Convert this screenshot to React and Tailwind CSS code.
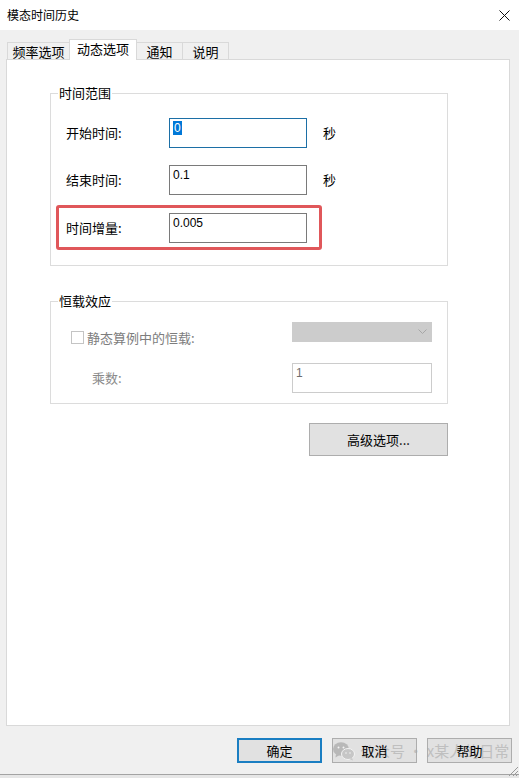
import React from 'react';

const FONT = "font-['Microsoft_YaHei','Noto_Sans_CJK_SC',sans-serif]";

// plain text box, text sits at the top-left like a Win32 edit control
const Field = ({ value, focused, selected }) => (
  <div
    className={`w-[138px] h-[30px] bg-white border ${focused ? 'border-[#1c6fa6]' : 'border-[#7a7a7a]'} pl-[3px] pt-[2px] text-[12px] leading-[14px] font-['Liberation_Sans',sans-serif]`}
  >
    {selected ? <span className="bg-[#0078d7] text-white px-px">{value}</span> : value}
  </div>
);

const Row = ({ label, children, unit }) => (
  <div className="h-[30px] flex items-center">
    <div className="w-[103px] leading-[18px]">{label}</div>
    {children}
    {unit && <div className="ml-[16px] leading-[18px]">{unit}</div>}
  </div>
);

const GroupLabel = ({ children }) => (
  <div className="self-start ml-[7px] -mt-[10px] px-[1px] h-[18px] leading-[18px] bg-white">{children}</div>
);

const Tab = ({ label, active, w }) =>
  active ? (
    <div
      className={`${w} h-[21px] -mb-px -ml-px relative z-10 bg-white border border-b-0 border-[#d9d9d9] flex items-start justify-center leading-[18px]`}
    >
      {label}
    </div>
  ) : (
    <div
      className={`${w} h-[17px] -ml-px bg-[#f0f0f0] border border-b-0 border-[#d9d9d9] flex items-center justify-center leading-[17px] pt-[1px]`}
    >
      {label}
    </div>
  );

const Button = ({ label, primary }) => (
  <div
    className={`w-[85px] h-[25px] bg-[#e1e1e1] flex items-center justify-center leading-[18px] ${primary ? 'border-2 border-[#1a7ec2]' : 'border border-[#adadad]'}`}
  >
    {/* label stays above the watermark */}
    <span className="relative z-30">{label}</span>
  </div>
);

export default function App() {
  return (
    <div className={`w-[519px] h-[778px] bg-[#f0f0f0] flex flex-col relative overflow-hidden text-[13px] text-black ${FONT}`}>
      {/* title bar */}
      <div className="h-[30px] bg-white flex items-center justify-between pl-[7px] pr-[9px] shrink-0">
        <div className="text-[12px] leading-[16px]">模态时间历史</div>
        <svg width="11" height="11" viewBox="0 0 11 11">
          <path d="M0.5 0.5 L10.5 10.5 M10.5 0.5 L0.5 10.5" stroke="#111" strokeWidth="1" />
        </svg>
      </div>

      {/* tabs */}
      <div className="h-[29px] flex items-end pl-[8px] shrink-0">
        <Tab label="频率选项" w="w-[63px]" />
        <Tab label="动态选项" w="w-[68px]" active />
        <Tab label="通知" w="w-[47px]" />
        <Tab label="说明" w="w-[47px]" />
      </div>

      {/* page */}
      <div className="ml-[6px] w-[504px] h-[667px] bg-white border border-[#d9d9d9] shrink-0 flex flex-col pl-[43px] pt-[33px]">
        {/* 时间范围 */}
        <div className="w-[398px] h-[173px] border border-[#dcdcdc] flex flex-col">
          <GroupLabel>时间范围</GroupLabel>
          <div className="mt-[16px] pl-[15px]">
            <Row label="开始时间:" unit="秒">
              <Field value="0" focused selected />
            </Row>
          </div>
          <div className="mt-[17px] pl-[15px]">
            <Row label="结束时间:" unit="秒">
              <Field value="0.1" />
            </Row>
          </div>
          <div className="mt-[10px] ml-[5px] w-[266px] h-[45px] border-[3px] border-[#e0575a] rounded-[3px] flex items-center pl-[7px]">
            <Row label="时间增量:">
              <Field value="0.005" />
            </Row>
          </div>
        </div>

        {/* 恒载效应 */}
        <div className="mt-[35px] w-[398px] h-[103px] border border-[#dcdcdc] flex flex-col">
          <GroupLabel>恒载效应</GroupLabel>
          <div className="mt-[12px] flex items-start">
            <div className="w-[241px] pl-[20px] mt-[9px] h-[13px] flex items-center text-[#7d7d7d]">
              <div className="w-[13px] h-[13px] border border-[#c4c4c4] bg-white shrink-0" />
              <div className="ml-[3px] leading-[18px]">静态算例中的恒载:</div>
            </div>
            <div className="w-[140px] h-[20px] bg-[#cccccc] flex items-center justify-end pr-[5px]">
              <svg width="9" height="6" viewBox="0 0 9 6">
                <path d="M0.5 0.5 L4.5 4.5 L8.5 0.5" fill="none" stroke="#a6a6a6" strokeWidth="1" />
              </svg>
            </div>
          </div>
          <div className="mt-[19px] h-[30px] flex items-center">
            <div className="w-[241px] pl-[41px] text-[#8a8a8a] leading-[18px]">乘数:</div>
            <div className="w-[140px] h-[30px] border border-[#cccccc] bg-white pl-[3px] pt-[2px] text-[12px] leading-[14px] text-[#6d6d6d] font-['Liberation_Sans',sans-serif]">
              1
            </div>
          </div>
        </div>

        <div className="mt-[19px] w-[398px] flex justify-end">
          <div className="w-[139px] h-[33px] bg-[#e1e1e1] border border-[#adadad] flex items-center justify-center leading-[18px]">
            高级选项...
          </div>
        </div>
      </div>

      {/* dialog buttons */}
      <div className="mt-[12px] flex justify-end gap-[10px] pr-[7px] shrink-0">
        <Button label="确定" primary />
        <Button label="取消" />
        <Button label="帮助" />
      </div>

      <div className="mt-auto h-[4px] border-t border-[#a3a3a3] bg-[#e6e6e6] shrink-0" />

      {/* resize grip */}
      <svg className="absolute right-0 bottom-[1px]" width="13" height="13" viewBox="0 0 13 13">
        <path d="M12 3 L3 12 M12 7 L7 12 M12 10 L10 12" stroke="#9a9a9a" strokeWidth="1" />
      </svg>

      {/* watermark */}
      <div className="absolute z-20 left-[333px] top-[741px] flex items-center pointer-events-none opacity-60">
        <svg width="22" height="20" viewBox="0 0 22 20">
          <ellipse cx="8" cy="8" rx="8" ry="6.8" fill="#9e9e9e" />
          <path d="M3 13 L2.5 16.5 L6.5 14 Z" fill="#9e9e9e" />
          <ellipse cx="15" cy="13" rx="6.5" ry="5.5" fill="#b5b5b5" stroke="#fff" strokeWidth="1" />
          <path d="M19 17 L20 19.5 L16.5 18 Z" fill="#b5b5b5" />
          <circle cx="5.5" cy="6.5" r="1" fill="#fff" />
          <circle cx="10.5" cy="6.5" r="1" fill="#fff" />
          <circle cx="13" cy="12" r="0.8" fill="#fff" />
          <circle cx="17" cy="12" r="0.8" fill="#fff" />
        </svg>
        <div className="ml-[5px] text-[15px] leading-[20px] text-[#a9a9a9] whitespace-pre font-['Noto_Sans_CJK_SC',sans-serif]">
          公众号 · x某人的日常
        </div>
      </div>
    </div>
  );
}
